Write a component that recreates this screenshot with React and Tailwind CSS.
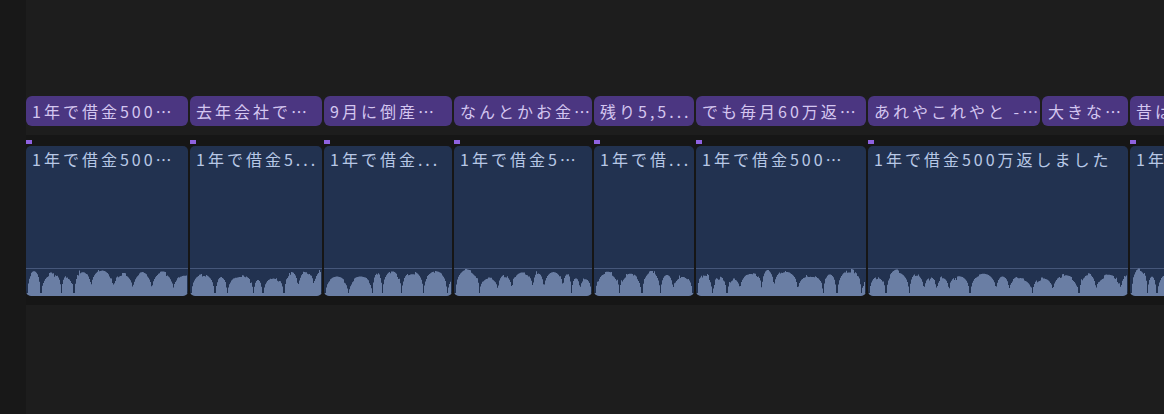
import React from "react";

const chips = [
  { w: 162, t: "1年で借金500⋯" },
  { w: 132, t: "去年会社で⋯" },
  { w: 128, t: "9月に倒産⋯" },
  { w: 138, t: "なんとかお金⋯" },
  { w: 100, t: "残り5,5..." },
  { w: 170, t: "でも毎月60万返⋯" },
  { w: 172, t: "あれやこれやと -⋯" },
  { w: 86, t: "大きな⋯" },
  { w: 120, t: "昔はお金⋯" },
];

const clips = [
  { w: 162, t: "1年で借金500⋯", seed: 3 },
  { w: 132, t: "1年で借金5...", seed: 17 },
  { w: 128, t: "1年で借金...", seed: 29 },
  { w: 138, t: "1年で借金5⋯", seed: 41 },
  { w: 100, t: "1年で借...", seed: 53 },
  { w: 170, t: "1年で借金500⋯", seed: 67 },
  { w: 260, t: "1年で借金500万返しました", seed: 79 },
  { w: 120, t: "1年...", seed: 91 },
];

function rng(seed) {
  let s = seed * 99991 + 12345;
  return () => {
    s = (s * 1664525 + 1013904223) % 4294967296;
    return s / 4294967296;
  };
}

function wavePath(w, seed, H) {
  const r = rng(seed);
  const h = new Array(w).fill(3);
  let x = 2;
  while (x < w - 2) {
    const len = 8 + Math.floor(r() * 18);
    const amp = 16 + r() * 10;
    let jitter = 0;
    for (let i = 0; i < len && x + i < w - 1; i++) {
      const t = (i + 0.5) / len;
      const env = Math.pow(Math.sin(Math.PI * t), 0.3);
      if (r() < 0.3) jitter = (r() - 0.5) * 4;
      const v = amp * env + jitter;
      h[x + i] = Math.max(h[x + i], v);
    }
    x += len;
    if (r() < 0.6) x += 1 + Math.floor(r() * 2);
  }
  let d = `M0 ${H}`;
  for (let i = 0; i < w; i++) {
    const y = (H - Math.max(3, h[i])).toFixed(1);
    d += ` L${i} ${y} L${i + 1} ${y}`;
  }
  d += ` L${w} ${H} Z`;
  return d;
}

function Chip({ w, t }) {
  return (
    <div
      className="shrink-0 h-[30px] rounded-[6px] bg-[#4b3681] text-[#d4c6f0] flex items-center pl-[6px] overflow-hidden whitespace-nowrap text-[16px] tracking-[3px]"
      style={{ width: w }}
    >
      {t}
    </div>
  );
}

function Clip({ w, t, seed }) {
  const H = 32;
  return (
    <div className="shrink-0 flex flex-col gap-[2px]" style={{ width: w }}>
      <div className="w-[6px] h-[4px] bg-[#8f62e0]" />
      <div className="h-[150px] rounded-[5px] bg-[#223250] overflow-hidden flex flex-col">
        <div className="pl-[6px] pt-[3px] h-[24px] text-[16px] leading-[20px] tracking-[3px] text-[#b8c8e6] whitespace-nowrap overflow-hidden">
          {t}
        </div>
        <div className="flex-1" />
        <div className="h-px bg-[#46577a]" />
        <div className="h-[27px] relative">
          <svg
            className="absolute left-0 bottom-0"
            width={w}
            height={H}
            viewBox={`0 0 ${w} ${H}`}
          >
            <path d={wavePath(w, seed, H)} fill="#6a7ea4" />
          </svg>
        </div>
      </div>
    </div>
  );
}

export default function App() {
  return (
    <div
      className="w-[1164px] h-[414px] flex bg-[#1d1d1d] overflow-hidden"
      style={{ fontFamily: '"Noto Sans CJK JP", "Noto Sans", sans-serif' }}
    >
      <div className="w-[26px] shrink-0 bg-[#181818]" />
      <div className="flex-1 flex flex-col overflow-hidden">
        <div className="h-[96px] shrink-0" />
        <div className="flex gap-[2px] shrink-0">
          {chips.map((c, i) => (
            <Chip key={i} {...c} />
          ))}
        </div>
        <div className="h-[9px] shrink-0" />
        <div className="h-[170px] shrink-0 bg-[#161616] pt-[5px] flex gap-[2px]">
          {clips.map((c, i) => (
            <Clip key={i} {...c} />
          ))}
        </div>
      </div>
    </div>
  );
}
